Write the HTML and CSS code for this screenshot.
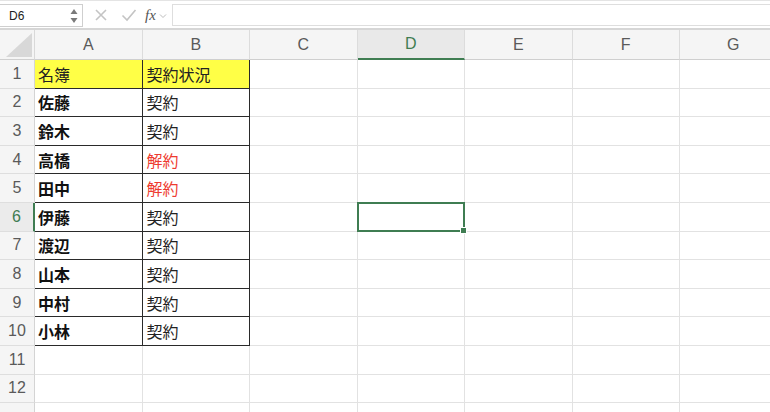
FILE: index.html
```html
<!DOCTYPE html>
<html lang="ja">
<head>
<meta charset="utf-8">
<title>Sheet</title>
<link rel="stylesheet" href="styles.css">
</head>
<body>
<div class="app">
  <div class="toolbar">
    <div class="namebox">
      <span class="name">D6</span>
      <span class="spin">
        <svg width="8" height="16" viewBox="0 0 8 16"><path d="M4 1 L7.5 6 L0.5 6 Z" fill="#7a7a7a"/><path d="M4 15 L7.5 10 L0.5 10 Z" fill="#7a7a7a"/></svg>
      </span>
    </div>
    <div class="btns">
      <svg class="ico" width="14" height="14" viewBox="0 0 14 14"><path d="M2 2 L12 12 M12 2 L2 12" stroke="#c4c4c4" stroke-width="1.6" fill="none"/></svg>
      <svg class="ico" width="16" height="14" viewBox="0 0 16 14"><path d="M1.5 7.5 L6 12 L14.5 2" stroke="#c4c4c4" stroke-width="1.6" fill="none"/></svg>
      <span class="fx">fx</span>
      <svg class="chev" width="8" height="6" viewBox="0 0 8 6"><path d="M1 1.5 L4 4.5 L7 1.5" stroke="#bdbdbd" stroke-width="1" fill="none"/></svg>
    </div>
    <div class="formula"></div>
  </div>
  <div class="band"></div>
  <div class="grid">
    <div class="corner"><svg width="26" height="24" viewBox="0 0 26 24"><path d="M26 0 L26 24 L0 24 Z" fill="#d8d8d8"/></svg></div>
    <div class="ch">A</div><div class="ch">B</div><div class="ch">C</div><div class="ch sel">D</div><div class="ch">E</div><div class="ch">F</div><div class="ch">G</div>

    <div class="rh">1</div><div class="c t hd y">名簿</div><div class="c t y">契約状況</div><div class="c"></div><div class="c"></div><div class="c"></div><div class="c"></div><div class="c"></div>
    <div class="rh">2</div><div class="c t n">佐藤</div><div class="c t">契約</div><div class="c"></div><div class="c"></div><div class="c"></div><div class="c"></div><div class="c"></div>
    <div class="rh">3</div><div class="c t n">鈴木</div><div class="c t">契約</div><div class="c"></div><div class="c"></div><div class="c"></div><div class="c"></div><div class="c"></div>
    <div class="rh">4</div><div class="c t n">高橋</div><div class="c t red">解約</div><div class="c"></div><div class="c"></div><div class="c"></div><div class="c"></div><div class="c"></div>
    <div class="rh">5</div><div class="c t n">田中</div><div class="c t red">解約</div><div class="c"></div><div class="c"></div><div class="c"></div><div class="c"></div><div class="c"></div>
    <div class="rh act">6</div><div class="c t n">伊藤</div><div class="c t">契約</div><div class="c"></div><div class="c active"></div><div class="c"></div><div class="c"></div><div class="c"></div>
    <div class="rh">7</div><div class="c t n">渡辺</div><div class="c t">契約</div><div class="c"></div><div class="c"></div><div class="c"></div><div class="c"></div><div class="c"></div>
    <div class="rh">8</div><div class="c t n">山本</div><div class="c t">契約</div><div class="c"></div><div class="c"></div><div class="c"></div><div class="c"></div><div class="c"></div>
    <div class="rh">9</div><div class="c t n">中村</div><div class="c t">契約</div><div class="c"></div><div class="c"></div><div class="c"></div><div class="c"></div><div class="c"></div>
    <div class="rh">10</div><div class="c t n">小林</div><div class="c t">契約</div><div class="c"></div><div class="c"></div><div class="c"></div><div class="c"></div><div class="c"></div>
    <div class="rh">11</div><div class="c"></div><div class="c"></div><div class="c"></div><div class="c"></div><div class="c"></div><div class="c"></div><div class="c"></div>
    <div class="rh">12</div><div class="c"></div><div class="c"></div><div class="c"></div><div class="c"></div><div class="c"></div><div class="c"></div><div class="c"></div>
    <div class="rh"></div><div class="c"></div><div class="c"></div><div class="c"></div><div class="c"></div><div class="c"></div><div class="c"></div><div class="c"></div>
  </div>
</div>
</body>
</html>
```

FILE: styles.css
```css
* { box-sizing: border-box; }
html, body { margin: 0; padding: 0; }
body {
  width: 770px;
  height: 412px;
  overflow: hidden;
  background: #ffffff;
  font-family: "Liberation Sans", Arial, sans-serif;
}
.app { width: 770px; height: 412px; overflow: hidden; }

.toolbar {
  height: 28px;
  display: flex;
  align-items: flex-start;
  padding-top: 3px;
  background: #ffffff;
  border-top: 1px solid #e4e4e4;
}
.namebox {
  width: 83px;
  height: 23px;
  border: 1px solid #cfcfcf;
  border-left: none;
  display: flex;
  align-items: center;
  justify-content: space-between;
  padding: 0 4px 0 9px;
  background: #fff;
}
.name { font-size: 12px; color: #222; }
.spin { display: flex; align-items: center; }
.btns {
  width: 89px;
  flex: none;
  display: flex;
  align-items: center;
  height: 22px;
  padding-left: 11px;
}
.btns .ico { margin-right: 13px; }
.btns .ico + .ico { margin-right: 8px; }
.fx {
  font-family: "Liberation Serif", "Times New Roman", serif;
  font-style: italic;
  font-size: 15px;
  color: #555;
  margin-right: 3px;
}
.chev { margin-top: 2px; }
.formula {
  flex: 1;
  height: 22px;
  border: 1px solid #dedede;
  border-right: none;
  background: #fff;
}
.band {
  height: 2px;
  background: #d6d6d6;
}

.grid {
  display: grid;
  grid-template-columns: 35px repeat(7, 107.5px);
  grid-template-rows: 30px repeat(13, 28.6px);
}
.corner {
  background: #f5f5f5;
  border-right: 1px solid #d9d9d9;
  border-bottom: 1px solid #cfcfcf;
  display: flex;
  align-items: flex-end;
  justify-content: flex-end;
  padding: 0 2px 2px 0;
}
.ch {
  background: #f5f5f5;
  border-right: 1px solid #dcdcdc;
  border-bottom: 1px solid #cfcfcf;
  display: flex;
  align-items: center;
  justify-content: center;
  font-size: 16px;
  color: #5a5a5a;
}
.ch.sel {
  background: #e9e9e9;
  color: #3f7d52;
  border-bottom: 2px solid #3f7d52;
}
.rh {
  background: #f5f5f5;
  border-right: 1px solid #d4d4d4;
  border-bottom: 1px solid #dedede;
  display: flex;
  align-items: center;
  justify-content: center;
  font-size: 16px;
  color: #5a5a5a;
}
.rh.act {
  background: #ebebeb;
  color: #3f7d52;
  border-right: 2px solid #3f7d52;
}
.c {
  border-right: 1px solid #e2e2e2;
  border-bottom: 1px solid #e2e2e2;
  font-family: "Noto Sans CJK JP", "Noto Sans", sans-serif;
  font-size: 16px;
  color: #222;
  display: flex;
  align-items: center;
  padding: 0 4px;
}
.c.t {
  border-right: 1px solid #2a2a2a;
  border-bottom: 1px solid #2a2a2a;
}
.c.n { font-weight: 700; color: #111; padding-left: 3px; }
.c.hd { padding-left: 3px; }
.c.y { background: #ffff46; }
.c.red { color: #ee3b30; }
.c.active { position: relative; }
.c.active::after {
  content: "";
  position: absolute;
  left: -1px;
  top: -1px;
  right: -1px;
  bottom: -1px;
  border: 2px solid #3f7d52;
}
.c.active::before {
  content: "";
  position: absolute;
  right: -3px;
  bottom: -3px;
  width: 5px;
  height: 5px;
  background: #3f7d52;
  border: 1px solid #fff;
  z-index: 2;
}
```
